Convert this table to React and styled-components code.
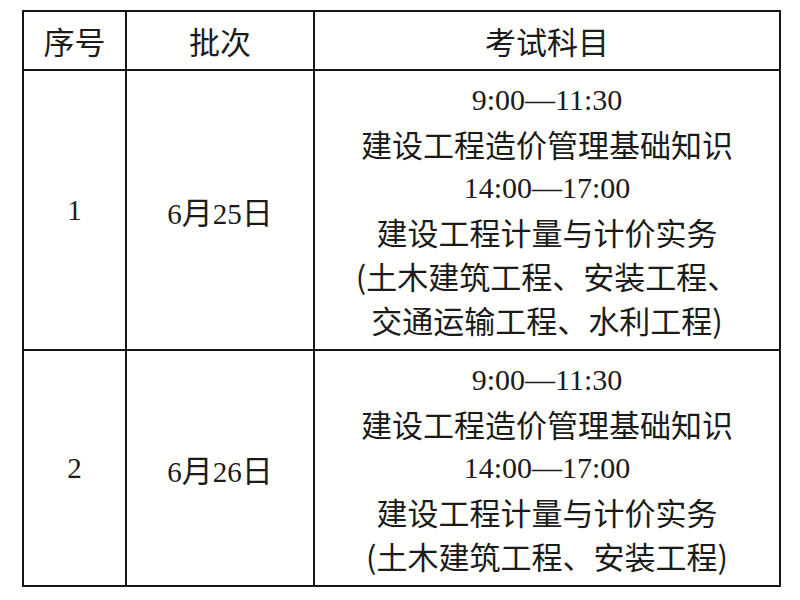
import React from "react"
import styled, { createGlobalStyle } from "styled-components"

const GlobalStyle = createGlobalStyle`
  html, body {
    margin: 0;
    padding: 0;
    background: #fffffd;
  }
`

const Page = styled.div`
  width: 800px;
  height: 600px;
  padding: 10px 0 0 22px;
  box-sizing: border-box;
  font-family: "Noto Sans CJK SC", "Noto Sans", sans-serif;
  color: #1b1b1b;
`

const Table = styled.table`
  border-collapse: collapse;
  width: 757px;
  table-layout: fixed;
`

const HeadCell = styled.th`
  border: 2px solid #161616;
  height: 57px;
  padding: 0;
  font-weight: 400;
  font-size: 31px;
  line-height: 44px;
  text-align: center;
  vertical-align: middle;
`

const Cell = styled.td`
  border: 2px solid #161616;
  padding: ${props => props.$pad || "0"};
  text-align: center;
  vertical-align: middle;
  height: ${props => props.$h || "auto"};
`

const Num = styled.span`
  font-family: "Liberation Serif", "Times New Roman", serif;
  font-size: 29px;
`

const Han = styled.span`
  font-size: 31px;
`

const Line = styled.div`
  line-height: 44px;
  font-size: ${props => (props.$time ? "30px" : "31px")};
  font-family: ${props =>
    props.$time
      ? `"Liberation Serif", "Times New Roman", serif`
      : `"Noto Sans CJK SC", "Noto Sans", sans-serif`};
  white-space: nowrap;
`

const rows = [
  {
    id: "1",
    day: "25",
    lines: [
      { t: "9:00—11:30", time: true },
      { t: "建设工程造价管理基础知识" },
      { t: "14:00—17:00", time: true },
      { t: "建设工程计量与计价实务" },
      { t: "(土木建筑工程、安装工程、" },
      { t: "交通运输工程、水利工程)" },
    ],
    h: "278px",
  },
  {
    id: "2",
    day: "26",
    lines: [
      { t: "9:00—11:30", time: true },
      { t: "建设工程造价管理基础知识" },
      { t: "14:00—17:00", time: true },
      { t: "建设工程计量与计价实务" },
      { t: "(土木建筑工程、安装工程)" },
    ],
    h: "233px",
  },
]

const App = () => {
  return (
    <Page>
      <GlobalStyle />
      <Table>
        <colgroup>
          <col style={{ width: "103px" }} />
          <col style={{ width: "188px" }} />
          <col style={{ width: "466px" }} />
        </colgroup>
        <thead>
          <tr>
            <HeadCell>序号</HeadCell>
            <HeadCell>批次</HeadCell>
            <HeadCell>考试科目</HeadCell>
          </tr>
        </thead>
        <tbody>
          {rows.map(row => (
            <tr key={row.id}>
              <Cell $h={row.h}>
                <Num>{row.id}</Num>
              </Cell>
              <Cell>
                <Num>6</Num>
                <Han>月</Han>
                <Num>{row.day}</Num>
                <Han>日</Han>
              </Cell>
              <Cell $pad="7px 0">
                {row.lines.map((l, i) => (
                  <Line key={i} $time={l.time}>
                    {l.t}
                  </Line>
                ))}
              </Cell>
            </tr>
          ))}
        </tbody>
      </Table>
    </Page>
  )
}

export default App
